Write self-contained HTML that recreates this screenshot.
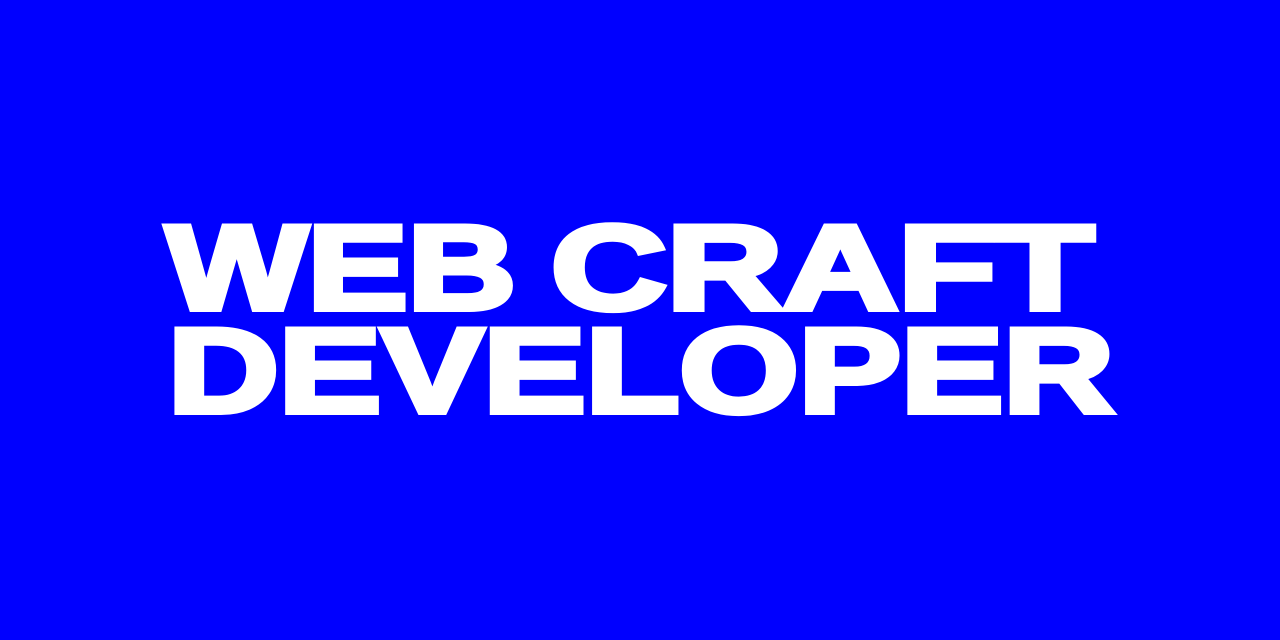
<!DOCTYPE html>
<html><head><meta charset="utf-8"><style>
html,body{margin:0;padding:0;width:1280px;height:640px;background:#0000ff;overflow:hidden}
svg{display:block}
</style></head><body>
<svg width="1280" height="640" viewBox="0 0 1280 640" xmlns="http://www.w3.org/2000/svg">
<rect width="1280" height="640" fill="#0000ff"/>
<g fill="#fff" font-family="Liberation Sans, Arial, sans-serif" font-weight="900" font-size="120" stroke="#fff" stroke-width="6" stroke-linejoin="miter">
<text x="166" y="309" textLength="350" lengthAdjust="spacingAndGlyphs">WEB</text>
<text x="551" y="309" textLength="543" lengthAdjust="spacingAndGlyphs">CRAFT</text>
<text x="168" y="412" textLength="946" lengthAdjust="spacingAndGlyphs">DEVELOPER</text>
</g>
</svg>
</body></html>
